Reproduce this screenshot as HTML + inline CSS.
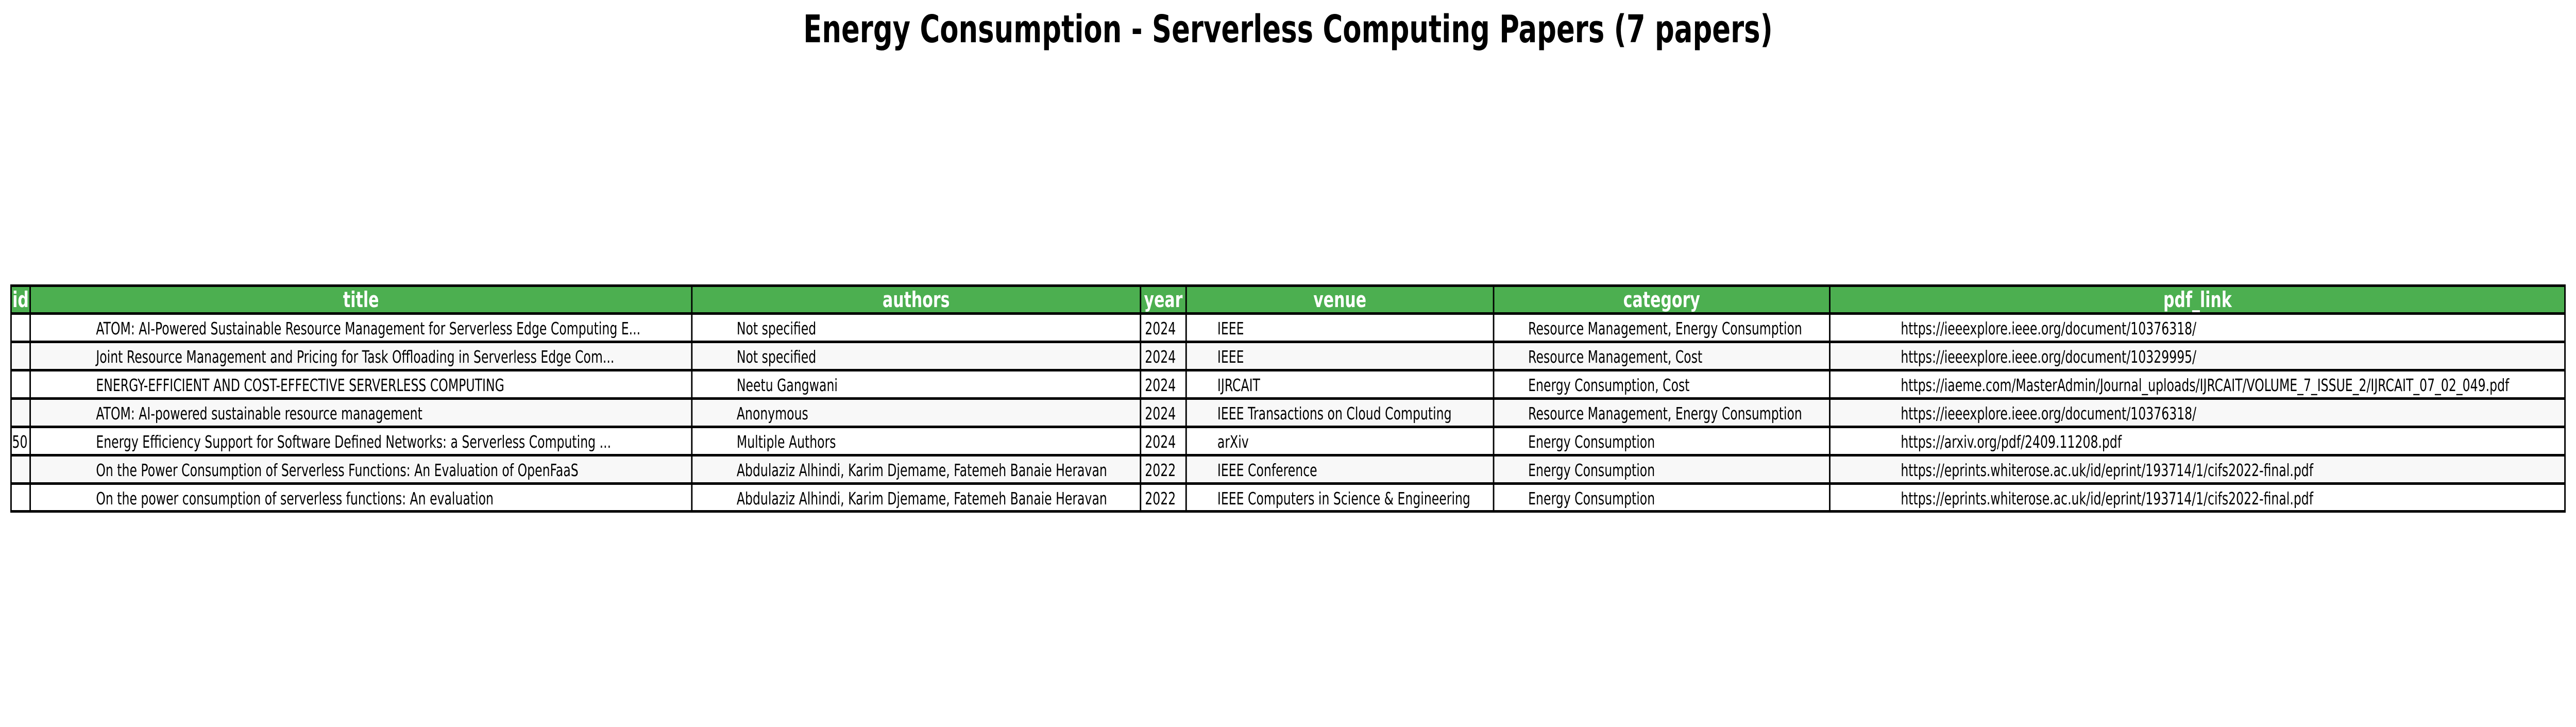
<!DOCTYPE html>
<html><head><meta charset="utf-8"><style>
html,body{margin:0;padding:0;background:#fff;overflow:hidden;}
body{width:100%;height:1411px;position:relative;font-family:"DejaVu Sans","Liberation Sans",sans-serif;}
#w{position:absolute;left:0;top:0;width:7004px;height:1411px;transform-origin:0 0;}
.t{position:absolute;left:0;width:7004px;top:14px;text-align:center;font-weight:bold;font-size:74px;color:#000;white-space:nowrap;}
.c{position:absolute;box-sizing:border-box;white-space:nowrap;font-size:33px;color:#000;display:flex;align-items:center;}
.h{color:#fff;font-weight:bold;font-size:42px;justify-content:center;}
.hl{position:absolute;background:#000;height:5px;left:28px;width:6947px;}
.vl{position:absolute;background:#000;width:4px;top:552px;height:443px;}
.row{position:absolute;left:30px;width:6945px;height:55px;}
</style></head><body>
<div id="w">
<div class="t">Energy Consumption - Serverless Computing Papers (7 papers)</div>

<div class="row" style="top:552px;height:57px;background:#4caf50"></div>
<div class="row" style="top:608px;background:#fff"></div>
<div class="row" style="top:663px;background:#f8f8f8"></div>
<div class="row" style="top:718px;background:#fff"></div>
<div class="row" style="top:773px;background:#f8f8f8"></div>
<div class="row" style="top:828px;background:#fff"></div>
<div class="row" style="top:883px;background:#f8f8f8"></div>
<div class="row" style="top:938px;background:#fff"></div>

<div class="c h" style="left:30px;width:52px;top:554px;height:55px">id</div>
<div class="c h" style="left:82px;width:1799px;top:554px;height:55px">title</div>
<div class="c h" style="left:1881px;width:1220px;top:554px;height:55px">authors</div>
<div class="c h" style="left:3101px;width:124px;top:554px;height:55px">year</div>
<div class="c h" style="left:3225px;width:836px;top:554px;height:55px">venue</div>
<div class="c h" style="left:4061px;width:914px;top:554px;height:55px">category</div>
<div class="c h" style="left:4975px;width:2000px;top:554px;height:55px">pdf_link</div>

<div class="c" style="left:261px;top:610px;height:55px">ATOM: AI-Powered Sustainable Resource Management for Serverless Edge Computing E...</div>
<div class="c" style="left:2003px;top:610px;height:55px">Not specified</div>
<div class="c" style="left:3113px;top:610px;height:55px">2024</div>
<div class="c" style="left:3310px;top:610px;height:55px">IEEE</div>
<div class="c" style="left:4155px;top:610px;height:55px">Resource Management, Energy Consumption</div>
<div class="c" style="left:5168px;top:610px;height:55px">https://ieeexplore.ieee.org/document/10376318/</div>

<div class="c" style="left:261px;top:665px;height:55px">Joint Resource Management and Pricing for Task Offloading in Serverless Edge Com...</div>
<div class="c" style="left:2003px;top:665px;height:55px">Not specified</div>
<div class="c" style="left:3113px;top:665px;height:55px">2024</div>
<div class="c" style="left:3310px;top:665px;height:55px">IEEE</div>
<div class="c" style="left:4155px;top:665px;height:55px">Resource Management, Cost</div>
<div class="c" style="left:5168px;top:665px;height:55px">https://ieeexplore.ieee.org/document/10329995/</div>

<div class="c" style="left:261px;top:720px;height:55px">ENERGY-EFFICIENT AND COST-EFFECTIVE SERVERLESS COMPUTING</div>
<div class="c" style="left:2003px;top:720px;height:55px">Neetu Gangwani</div>
<div class="c" style="left:3113px;top:720px;height:55px">2024</div>
<div class="c" style="left:3310px;top:720px;height:55px">IJRCAIT</div>
<div class="c" style="left:4155px;top:720px;height:55px">Energy Consumption, Cost</div>
<div class="c" style="left:5168px;top:720px;height:55px">https://iaeme.com/MasterAdmin/Journal_uploads/IJRCAIT/VOLUME_7_ISSUE_2/IJRCAIT_07_02_049.pdf</div>

<div class="c" style="left:261px;top:775px;height:55px">ATOM: AI-powered sustainable resource management</div>
<div class="c" style="left:2003px;top:775px;height:55px">Anonymous</div>
<div class="c" style="left:3113px;top:775px;height:55px">2024</div>
<div class="c" style="left:3310px;top:775px;height:55px">IEEE Transactions on Cloud Computing</div>
<div class="c" style="left:4155px;top:775px;height:55px">Resource Management, Energy Consumption</div>
<div class="c" style="left:5168px;top:775px;height:55px">https://ieeexplore.ieee.org/document/10376318/</div>

<div class="c" style="left:33px;top:830px;height:55px">50</div>
<div class="c" style="left:261px;top:830px;height:55px">Energy Efficiency Support for Software Defined Networks: a Serverless Computing ...</div>
<div class="c" style="left:2003px;top:830px;height:55px">Multiple Authors</div>
<div class="c" style="left:3113px;top:830px;height:55px">2024</div>
<div class="c" style="left:3310px;top:830px;height:55px">arXiv</div>
<div class="c" style="left:4155px;top:830px;height:55px">Energy Consumption</div>
<div class="c" style="left:5168px;top:830px;height:55px">https://arxiv.org/pdf/2409.11208.pdf</div>

<div class="c" style="left:261px;top:885px;height:55px">On the Power Consumption of Serverless Functions: An Evaluation of OpenFaaS</div>
<div class="c" style="left:2003px;top:885px;height:55px">Abdulaziz Alhindi, Karim Djemame, Fatemeh Banaie Heravan</div>
<div class="c" style="left:3113px;top:885px;height:55px">2022</div>
<div class="c" style="left:3310px;top:885px;height:55px">IEEE Conference</div>
<div class="c" style="left:4155px;top:885px;height:55px">Energy Consumption</div>
<div class="c" style="left:5168px;top:885px;height:55px">https://eprints.whiterose.ac.uk/id/eprint/193714/1/cifs2022-final.pdf</div>

<div class="c" style="left:261px;top:940px;height:55px">On the power consumption of serverless functions: An evaluation</div>
<div class="c" style="left:2003px;top:940px;height:55px">Abdulaziz Alhindi, Karim Djemame, Fatemeh Banaie Heravan</div>
<div class="c" style="left:3113px;top:940px;height:55px">2022</div>
<div class="c" style="left:3310px;top:940px;height:55px">IEEE Computers in Science &amp; Engineering</div>
<div class="c" style="left:4155px;top:940px;height:55px">Energy Consumption</div>
<div class="c" style="left:5168px;top:940px;height:55px">https://eprints.whiterose.ac.uk/id/eprint/193714/1/cifs2022-final.pdf</div>

<div class="hl" style="top:552px"></div>
<div class="hl" style="top:606px"></div>
<div class="hl" style="top:661px"></div>
<div class="hl" style="top:716px"></div>
<div class="hl" style="top:771px"></div>
<div class="hl" style="top:826px"></div>
<div class="hl" style="top:881px"></div>
<div class="hl" style="top:936px"></div>
<div class="hl" style="top:990px"></div>
<div class="vl" style="left:28px"></div>
<div class="vl" style="left:80px"></div>
<div class="vl" style="left:1879px"></div>
<div class="vl" style="left:3099px"></div>
<div class="vl" style="left:3223px"></div>
<div class="vl" style="left:4059px"></div>
<div class="vl" style="left:4973px"></div>
<div class="vl" style="left:6972px"></div>
</div>
<script>
(function(){var w=document.documentElement.clientWidth||window.innerWidth;var s=w/7004;if(s>0&&Math.abs(s-1)>0.001){document.getElementById('w').style.transform='scale('+s+',1)';}})();
</script>
</body></html>
